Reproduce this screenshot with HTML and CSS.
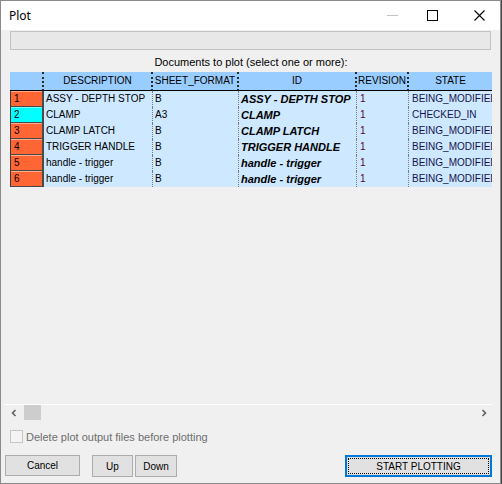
FILE: index.html
```
<!DOCTYPE html>
<html>
<head>
<meta charset="utf-8">
<title>Plot</title>
<link rel="stylesheet" href="styles.css">
</head>
<body>
<div class="window">
  <div class="titlebar">
    <span class="title">Plot</span>
    <div class="controls">
      <span class="ctl">
        <svg width="11" height="11" viewBox="0 0 11 11"><path d="M0 5.5H11" stroke="#c4c4c4" stroke-width="1"/></svg>
      </span>
      <span class="ctl">
        <svg width="11" height="11" viewBox="0 0 11 11"><rect x="0.5" y="0.5" width="10" height="10" fill="none" stroke="#000" stroke-width="1"/></svg>
      </span>
      <span class="ctl">
        <svg width="11" height="11" viewBox="0 0 11 11"><path d="M0.5 0.5L10.5 10.5M10.5 0.5L0.5 10.5" stroke="#000" stroke-width="1.1"/></svg>
      </span>
    </div>
  </div>
  <div class="content">
    <div class="field"></div>
    <div class="caption">Documents to plot (select one or more):</div>
    <div class="gridview">
      <div class="table">
        <div class="hcell rh"></div>
        <div class="hcell">DESCRIPTION</div>
        <div class="hcell">SHEET_FORMAT</div>
        <div class="hcell">ID</div>
        <div class="hcell">REVISION</div>
        <div class="hcell last">STATE</div>

        <div class="rcell orange">1</div>
        <div class="cell">ASSY - DEPTH STOP</div>
        <div class="cell">B</div>
        <div class="cell id">ASSY - DEPTH STOP</div>
        <div class="cell rev">1</div>
        <div class="cell state">BEING_MODIFIED</div>

        <div class="rcell cyan">2</div>
        <div class="cell">CLAMP</div>
        <div class="cell">A3</div>
        <div class="cell id">CLAMP</div>
        <div class="cell rev">1</div>
        <div class="cell state">CHECKED_IN</div>

        <div class="rcell orange">3</div>
        <div class="cell">CLAMP LATCH</div>
        <div class="cell">B</div>
        <div class="cell id">CLAMP LATCH</div>
        <div class="cell rev">1</div>
        <div class="cell state">BEING_MODIFIED</div>

        <div class="rcell orange">4</div>
        <div class="cell">TRIGGER HANDLE</div>
        <div class="cell">B</div>
        <div class="cell id">TRIGGER HANDLE</div>
        <div class="cell rev">1</div>
        <div class="cell state">BEING_MODIFIED</div>

        <div class="rcell orange">5</div>
        <div class="cell">handle - trigger</div>
        <div class="cell">B</div>
        <div class="cell id">handle - trigger</div>
        <div class="cell rev">1</div>
        <div class="cell state">BEING_MODIFIED</div>

        <div class="rcell orange">6</div>
        <div class="cell">handle - trigger</div>
        <div class="cell">B</div>
        <div class="cell id">handle - trigger</div>
        <div class="cell rev">1</div>
        <div class="cell state">BEING_MODIFIED</div>
      </div>
      <div class="spacer"></div>
      <div class="hscroll">
        <span class="arrow">
          <svg width="8" height="8" viewBox="0 0 8 8"><path d="M5.5 1L2.5 4L5.5 7" fill="none" stroke="#606060" stroke-width="1.6"/></svg>
        </span>
        <span class="thumb"></span>
        <span class="track"></span>
        <span class="arrow">
          <svg width="8" height="8" viewBox="0 0 8 8"><path d="M2.5 1L5.5 4L2.5 7" fill="none" stroke="#606060" stroke-width="1.6"/></svg>
        </span>
      </div>
    </div>
    <div class="checkrow">
      <span class="checkbox"></span>
      <span class="checklabel">Delete plot output files before plotting</span>
    </div>
    <div class="buttons">
      <button class="btn cancel">Cancel</button>
      <button class="btn up">Up</button>
      <button class="btn down">Down</button>
      <button class="btn start"><span class="focus">START PLOTTING</span></button>
    </div>
  </div>
</div>
</body>
</html>
```
FILE: styles.css
```
html, body {
  margin: 0;
  padding: 0;
  background: #4a4a4a;
}
body {
  width: 502px;
  height: 484px;
  overflow: hidden;
  font-family: "Liberation Sans", Arial, sans-serif;
}
.window {
  box-sizing: border-box;
  width: 501px;
  height: 484px;
  border: 1px solid #8a8a8a;
  background: #f0f0f0;
  display: flex;
  flex-direction: column;
}
.titlebar {
  height: 29px;
  background: #fff;
  display: flex;
  align-items: center;
  flex: none;
}
.title {
  font-family: "Noto Sans", "Open Sans", sans-serif;
  font-size: 12px;
  color: #000;
  margin-left: 8px;
  padding-bottom: 1px;
}
.controls {
  margin-left: auto;
  display: flex;
  align-items: center;
  height: 100%;
}
.ctl {
  width: 46px;
  height: 100%;
  display: flex;
  align-items: center;
  justify-content: center;
}
.ctl svg { display: block; }
.ctl:first-child { width: 46px; margin-right: -6px; }
.ctl:last-child { width: 41px; margin-left: 4px; }
.content {
  flex: 1;
  padding: 0 8px 0 9px;
  display: flex;
  flex-direction: column;
}
.field {
  box-sizing: border-box;
  margin-top: 1px;
  height: 19px;
  width: 481px;
  border: 1px solid #c2c2c2;
  background: #e8e8e8;
}
.caption {
  height: 22px;
  box-sizing: border-box;
  padding-top: 3px;
  line-height: 19px;
  font-size: 11px;
  text-align: center;
  color: #000;
}
.gridview {
  height: 348px;
  display: flex;
  flex-direction: column;
}
.table {
  display: grid;
  grid-template-columns: 34px 109px 86px 118px 52px 83px;
  grid-auto-rows: 16px;
  grid-template-rows: 19px;
  font-size: 10px;
}
.hcell {
  background: #99ccff;
  border-right: 2px dotted #2a2a2a;
  border-bottom: 1px solid #000;
  text-align: center;
  line-height: 18px;
  color: #000;
  white-space: nowrap;
  overflow: hidden;
}
.hcell.rh { border-right: 2px dotted #2a2a2a; }
.hcell.last { border-right: none; }
.rcell {
  box-sizing: border-box;
  border-left: 1px solid #3a3a3a;
  border-right: 2px solid #4a4a4a;
  border-bottom: 1px solid #4a4a4a;
  box-shadow: inset 0 1px 0 rgba(255,255,255,0.45);
  padding-left: 3px;
  line-height: 16px;
  color: #000;
}
.orange { background: #ff6633; }
.cyan { background: #00ffff; }
.cell {
  background: #cde8ff;
  border-right: 1px dotted #7a7a7a;
  padding-left: 2px;
  line-height: 16px;
  white-space: nowrap;
  overflow: hidden;
  color: #000;
}
.cell.id {
  font-weight: bold;
  font-style: italic;
  font-size: 11px;
}
.cell.rev { color: #5c0034; padding-left: 3px; }
.cell.state {
  color: #14144e;
  border-right: none;
  padding-left: 3px;
}
.spacer { flex: 1; }
.hscroll {
  height: 16px;
  box-sizing: border-box;
  border-top: 1px solid #fff;
  display: flex;
  align-items: center;
  margin-left: -6px;
}
.arrow {
  width: 17px;
  display: flex;
  justify-content: center;
}
.arrow svg { display: block; }
.arrow:first-child { width: 20px; }
.thumb {
  width: 17px;
  height: 15px;
  background: #cdcdcd;
}
.track { flex: 1; }
.checkrow {
  margin-top: 10px;
  display: flex;
  align-items: center;
  height: 13px;
}
.checkbox {
  box-sizing: border-box;
  width: 13px;
  height: 13px;
  border: 1px solid #c6c6c6;
  background: #f4f4f4;
}
.checklabel {
  margin-left: 3px;
  font-size: 11px;
  color: #6d6d6d;
}
.buttons {
  margin-top: 12px;
  display: flex;
  align-items: flex-start;
}
.btn {
  box-sizing: border-box;
  height: 22px;
  margin: 0;
  padding: 0;
  border: 1px solid #adadad;
  background: #e1e1e1;
  font-family: "Liberation Sans", Arial, sans-serif;
  font-size: 10px;
  color: #000;
}
.cancel { width: 75px; margin-left: -5px; height: 21px; }
.up { width: 41px; margin-left: 12px; }
.down { width: 42px; margin-left: 2px; }
.start {
  width: 147px;
  margin-left: auto;
  border: 2px solid #0078d7;
  padding: 1px;
  display: flex;
}
.focus {
  flex: 1;
  border: 1px dotted #000;
  display: flex;
  align-items: center;
  justify-content: center;
}
```
